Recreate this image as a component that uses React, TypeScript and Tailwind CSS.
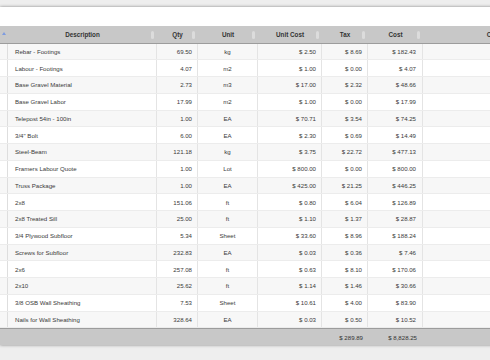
const rows = [
  ["Rebar - Footings", "69.50", "kg", "$ 2.50", "$ 8.69", "$ 182.43"],
  ["Labour - Footings", "4.07", "m2", "$ 1.00", "$ 0.00", "$ 4.07"],
  ["Base Gravel Material", "2.73", "m3", "$ 17.00", "$ 2.32", "$ 48.66"],
  ["Base Gravel Labor", "17.99", "m2", "$ 1.00", "$ 0.00", "$ 17.99"],
  ["Telepost 54in - 100in", "1.00", "EA", "$ 70.71", "$ 3.54", "$ 74.25"],
  ['3/4" Bolt', "6.00", "EA", "$ 2.30", "$ 0.69", "$ 14.49"],
  ["Steel-Beam", "121.18", "kg", "$ 3.75", "$ 22.72", "$ 477.13"],
  ["Framers Labour Quote", "1.00", "Lot", "$ 800.00", "$ 0.00", "$ 800.00"],
  ["Truss Package", "1.00", "EA", "$ 425.00", "$ 21.25", "$ 446.25"],
  ["2x8", "151.06", "ft", "$ 0.80", "$ 6.04", "$ 126.89"],
  ["2x8 Treated Sill", "25.00", "ft", "$ 1.10", "$ 1.37", "$ 28.87"],
  ["3/4 Plywood Subfloor", "5.34", "Sheet", "$ 33.60", "$ 8.96", "$ 188.24"],
  ["Screws for Subfloor", "232.83", "EA", "$ 0.03", "$ 0.36", "$ 7.46"],
  ["2x6", "257.08", "ft", "$ 0.63", "$ 8.10", "$ 170.06"],
  ["2x10", "25.62", "ft", "$ 1.14", "$ 1.46", "$ 30.66"],
  ["3/8 OSB Wall Sheathing", "7.53", "Sheet", "$ 10.61", "$ 4.00", "$ 83.90"],
  ["Nails for Wall Sheathing", "328.64", "EA", "$ 0.03", "$ 0.50", "$ 10.52"],
];

const cols = "grid grid-cols-[8px_149px_41px_60px_64px_46px_55px_160px]";

const Grip = () => (
  <span className="absolute right-[3px] top-[5px] w-[3px] h-[8px] rounded-full bg-[#dcdcdc]" />
);

const HeadCell = ({ label, grip = true }: { label: string; grip?: boolean }) => (
  <div className="relative flex items-center justify-center">
    <span>{label}</span>
    {grip && <Grip />}
  </div>
);

export default function App() {
  return (
    <div className="w-[490px] h-[360px] overflow-hidden bg-[#eeeeee] font-['Liberation_Sans',Arial,sans-serif]">
      <div className="mt-[7px] w-[600px] bg-white shadow-[0_0_3px_rgba(0,0,0,0.45)]">
        <div className="h-[19px] bg-white" />

        {/* header */}
        <div className={`${cols} h-[17.6px] bg-[#c8c8c8] border-b border-[#9c9c9c] text-[6.3px] font-bold text-[#333]`}>
          <div className="flex items-start justify-center pt-[6px]">
            <svg width="4" height="3" viewBox="0 0 4 3">
              <path d="M2 0 L4 3 L0 3 Z" fill="#7d9be0" />
            </svg>
          </div>
          <HeadCell label="Description" />
          <HeadCell label="Qty" />
          <HeadCell label="Unit" />
          <HeadCell label="Unit Cost" />
          <HeadCell label="Tax" />
          <HeadCell label="Cost" />
          <HeadCell label="Comments" grip={false} />
        </div>

        {/* body */}
        {rows.map((r, i) => (
          <div
            key={i}
            className={`${cols} h-[16.75px] text-[6.1px] text-[#3a3a3a] border-b border-[#ececec] ${
              i % 2 === 0 ? "bg-[#f7f7f7]" : "bg-white"
            }`}
          >
            <div className="border-r border-[#dedede]" />
            <div className="flex items-center pl-[7px] border-r border-[#e4e4e4]">{r[0]}</div>
            <div className="flex items-center justify-end pr-[5px] border-r border-[#e4e4e4]">{r[1]}</div>
            <div className="flex items-center justify-center border-r border-[#e4e4e4]">{r[2]}</div>
            <div className="flex items-center justify-end pr-[5px] border-r border-[#e4e4e4]">{r[3]}</div>
            <div className="flex items-center justify-end pr-[5px] border-r border-[#e4e4e4]">{r[4]}</div>
            <div className="flex items-center justify-end pr-[6px] border-r border-[#e4e4e4]">{r[5]}</div>
            <div />
          </div>
        ))}

        {/* footer */}
        <div className={`${cols} h-[17px] bg-[#c8c8c8] border-t border-[#9c9c9c] text-[6.1px] text-[#333]`}>
          <div />
          <div />
          <div />
          <div />
          <div />
          <div className="flex items-center justify-end pr-[5px]">$ 289.89</div>
          <div className="flex items-center justify-end pr-[6px]">$ 8,828.25</div>
          <div />
        </div>
      </div>
    </div>
  );
}
